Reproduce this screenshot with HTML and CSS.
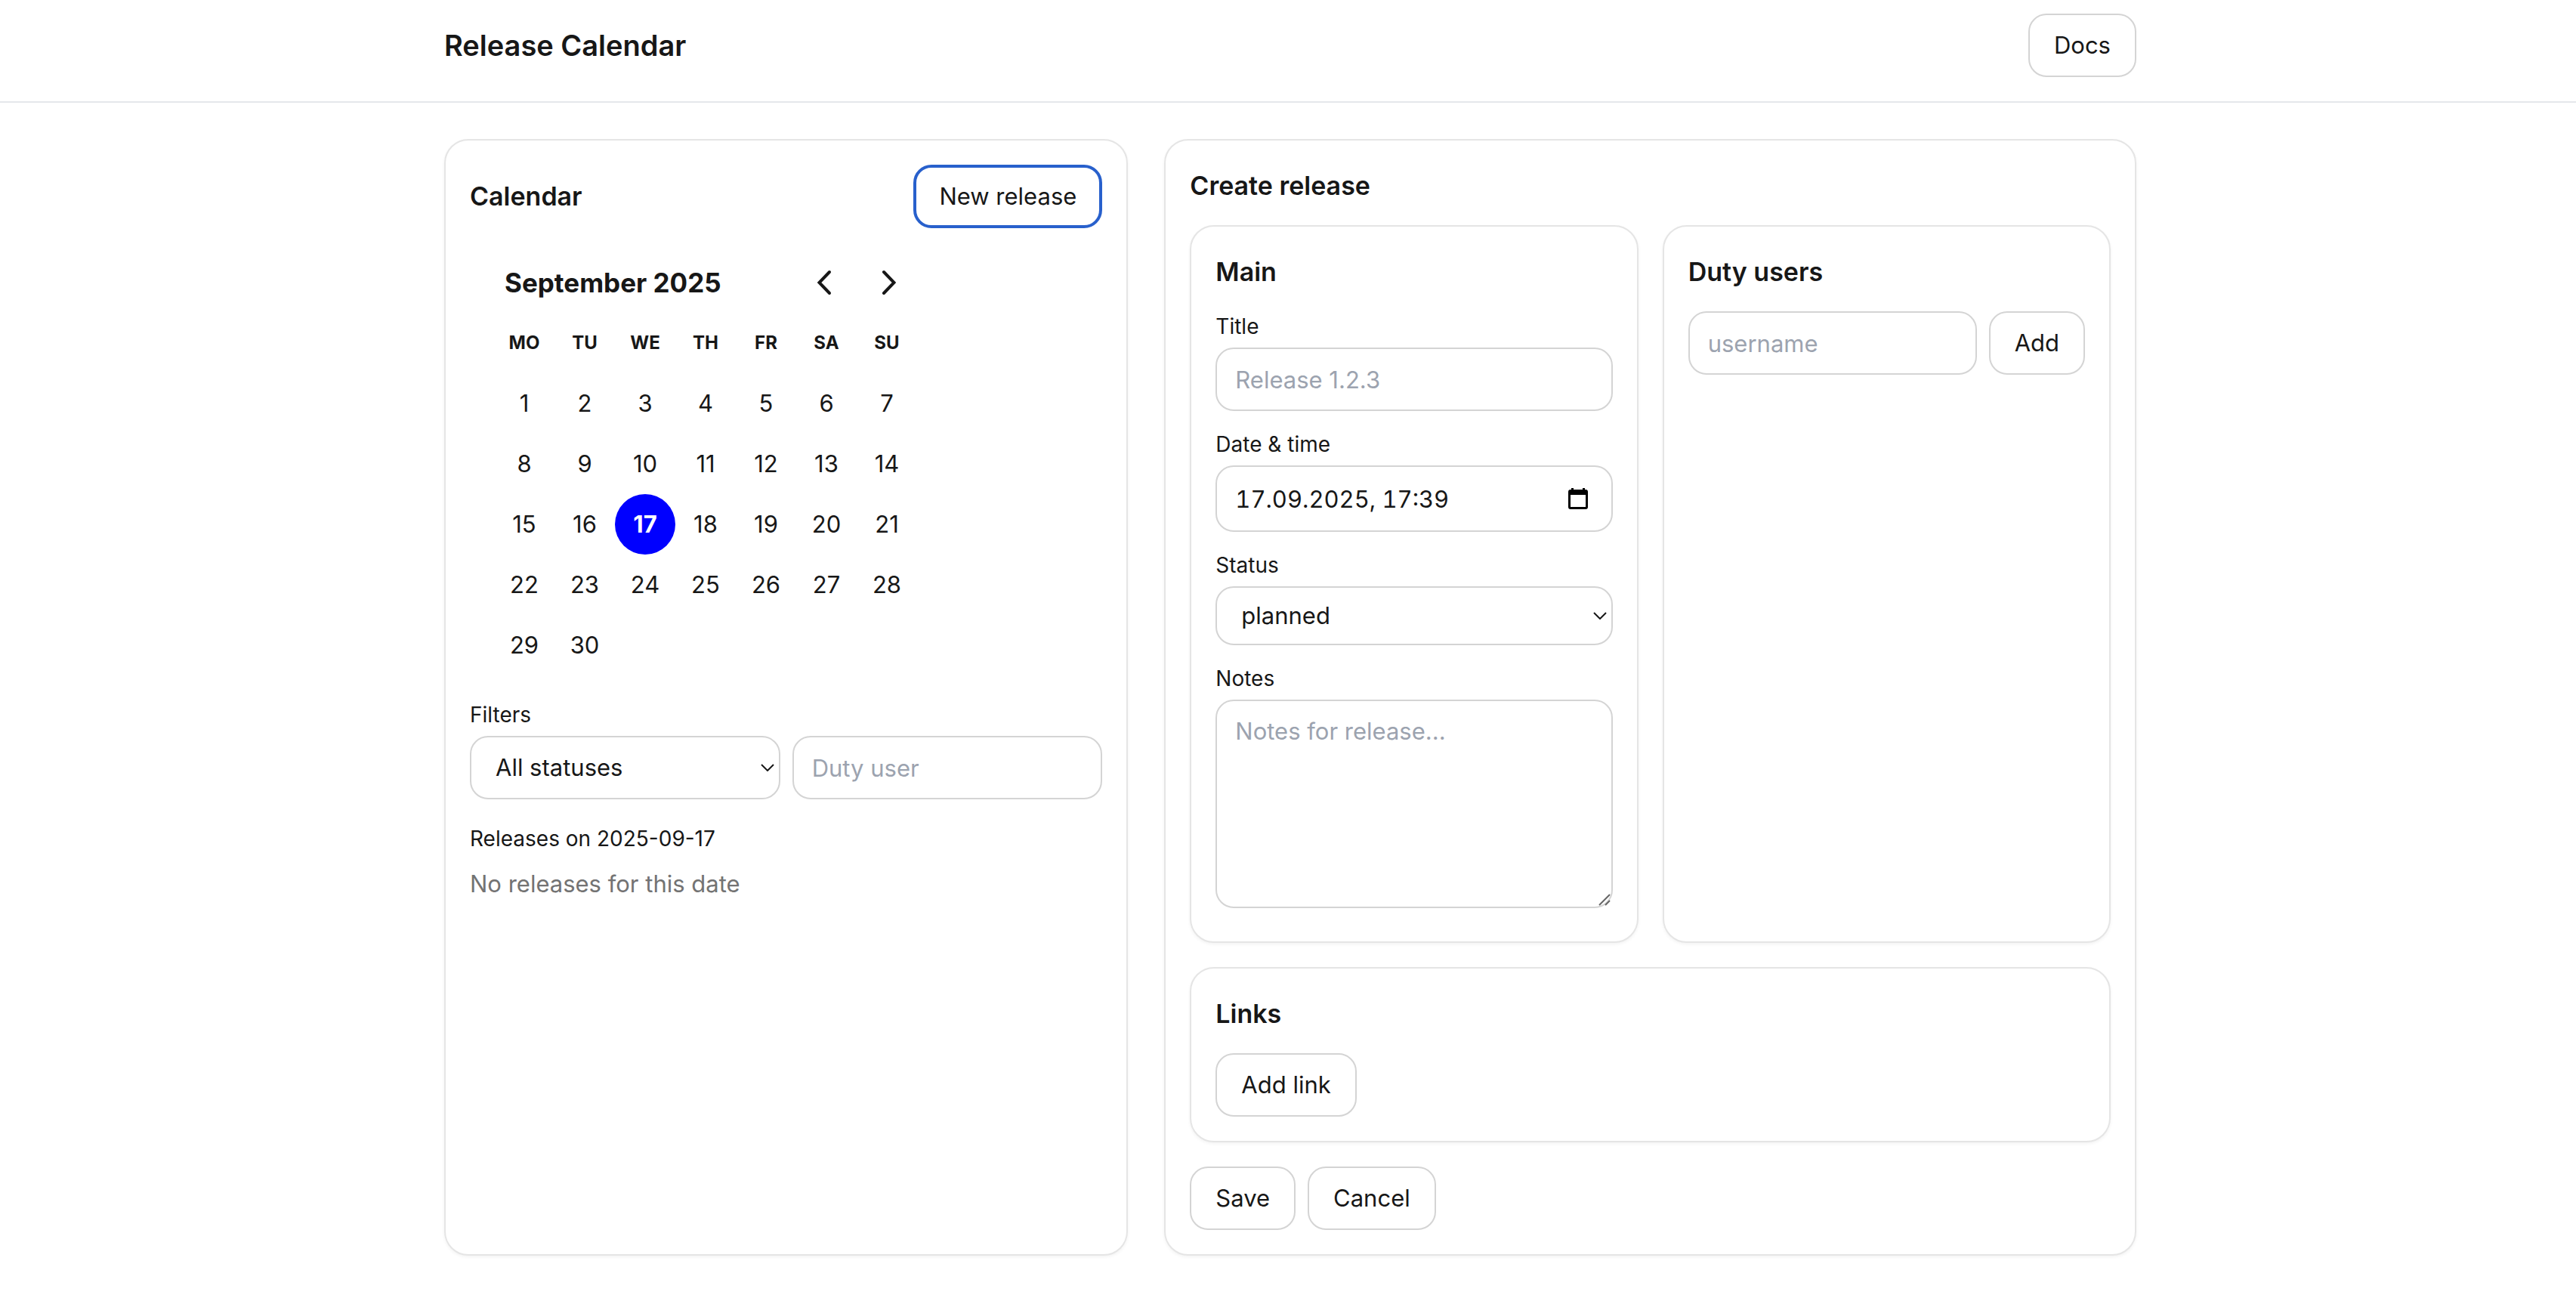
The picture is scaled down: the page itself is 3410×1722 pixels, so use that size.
FILE: index.html
```html
<!DOCTYPE html>
<html lang="en">
<head>
<meta charset="utf-8">
<meta name="viewport" content="width=device-width, initial-scale=1">
<title>Release Calendar</title>
<link rel="stylesheet" href="styles.css">
</head>
<body>
<header class="site-header">
  <div class="container header-row">
    <h1 class="site-title">Release Calendar</h1>
    <a class="btn" href="#docs">Docs</a>
  </div>
</header>
<main class="container layout">
  <section class="card sidebar">
    <div class="card-head">
      <h2 class="card-title">Calendar</h2>
      <button class="btn btn-focus" type="button">New release</button>
    </div>
    <div class="calendar">
      <div class="month-bar">
        <h3 class="month-name">September 2025</h3>
        <div class="month-nav">
          <button class="nav-btn" type="button" aria-label="Previous month"><svg width="24" height="34" viewBox="0 0 24 34"><path d="M20 3 6.500 17 20 31"/></svg></button>
          <button class="nav-btn" type="button" aria-label="Next month"><svg width="24" height="34" viewBox="0 0 24 34"><path d="M8 3l13.500 14L8 31"/></svg></button>
        </div>
      </div>
      <table class="days">
        <thead>
          <tr><th>Mo</th><th>Tu</th><th>We</th><th>Th</th><th>Fr</th><th>Sa</th><th>Su</th></tr>
        </thead>
        <tbody>
          <tr><td><button class="day" type="button">1</button></td><td><button class="day" type="button">2</button></td><td><button class="day" type="button">3</button></td><td><button class="day" type="button">4</button></td><td><button class="day" type="button">5</button></td><td><button class="day" type="button">6</button></td><td><button class="day" type="button">7</button></td></tr>
          <tr><td><button class="day" type="button">8</button></td><td><button class="day" type="button">9</button></td><td><button class="day" type="button">10</button></td><td><button class="day" type="button">11</button></td><td><button class="day" type="button">12</button></td><td><button class="day" type="button">13</button></td><td><button class="day" type="button">14</button></td></tr>
          <tr><td><button class="day" type="button">15</button></td><td><button class="day" type="button">16</button></td><td><button class="day day-selected" type="button" aria-pressed="true">17</button></td><td><button class="day" type="button">18</button></td><td><button class="day" type="button">19</button></td><td><button class="day" type="button">20</button></td><td><button class="day" type="button">21</button></td></tr>
          <tr><td><button class="day" type="button">22</button></td><td><button class="day" type="button">23</button></td><td><button class="day" type="button">24</button></td><td><button class="day" type="button">25</button></td><td><button class="day" type="button">26</button></td><td><button class="day" type="button">27</button></td><td><button class="day" type="button">28</button></td></tr>
          <tr><td><button class="day" type="button">29</button></td><td><button class="day" type="button">30</button></td><td></td><td></td><td></td><td></td><td></td></tr>
        </tbody>
      </table>
    </div>
    <div class="field">
      <label class="label" for="filter-status">Filters</label>
      <div class="filters">
        <div class="select-wrap">
          <select class="control select" id="filter-status"><option>All statuses</option><option>planned</option></select>
          <svg class="chevron" width="18" height="10" viewBox="0 0 18 10"><path d="M1 1l8 8 8-8"/></svg>
        </div>
        <input class="control" type="text" placeholder="Duty user" aria-label="Duty user">
      </div>
    </div>
    <div class="results">
      <h3 class="label">Releases on 2025-09-17</h3>
      <p class="empty">No releases for this date</p>
    </div>
  </section>
  <section class="card editor">
    <h2 class="card-title">Create release</h2>
    <form class="form">
      <div class="columns">
        <div class="card">
          <h3 class="card-title">Main</h3>
          <div class="fields">
            <div class="field">
              <label class="label" for="title">Title</label>
              <input class="control" id="title" type="text" placeholder="Release 1.2.3">
            </div>
            <div class="field">
              <label class="label" for="date">Date &amp; time</label>
              <div class="date-wrap">
                <input class="control control-date" id="date" type="text" value="17.09.2025, 17:39">
                <button class="picker" type="button" aria-label="Show date picker"><svg width="26" height="28" viewBox="0 0 26 28"><path fill-rule="evenodd" d="M4 0h3v2h12V0h3v2h1q3 0 3 3v20q0 3-3 3H3q-3 0-3-3V5q0-3 3-3h1zM3 9v16h20V9z"/></svg></button>
              </div>
            </div>
            <div class="field">
              <label class="label" for="status">Status</label>
              <div class="select-wrap">
                <select class="control select select-compact" id="status"><option>planned</option></select>
                <svg class="chevron" width="18" height="10" viewBox="0 0 18 10"><path d="M1 1l8 8 8-8"/></svg>
              </div>
            </div>
            <div class="field field-notes">
              <label class="label" for="notes">Notes</label>
              <div class="notes-wrap">
                <textarea class="control notes" id="notes" placeholder="Notes for release..."></textarea>
                <svg class="grip" width="16" height="16" viewBox="0 0 16 16"><path d="M1 15 15 1M9 15l6-6"/></svg>
              </div>
            </div>
          </div>
        </div>
        <div class="card">
          <h3 class="card-title">Duty users</h3>
          <div class="add-row">
            <input class="control" type="text" placeholder="username" aria-label="Username">
            <button class="btn" type="button">Add</button>
          </div>
        </div>
      </div>
      <div class="card">
        <h3 class="card-title">Links</h3>
        <button class="btn" type="button">Add link</button>
      </div>
      <div class="actions">
        <button class="btn" type="button">Save</button>
        <button class="btn" type="button">Cancel</button>
      </div>
    </form>
  </section>
</main>
</body>
</html>
```
FILE: styles.css
```css
*, *::before, *::after { box-sizing: border-box; }
body {
  margin: 0;
  background: #fff;
  color: #171717;
  font-family: Inter, "Liberation Sans", sans-serif;
  font-size: 31px;
  line-height: 48px;
}
h1, h2, h3, p { margin: 0; }
button, input, select, textarea { font: inherit; color: inherit; }

.container {
  max-width: 2310px;
  margin: 0 auto;
  padding: 0 32px 0 38px;
}
.site-header {
  padding: 18px 0 32px;
  border-bottom: 2px solid #e5e7eb;
}
.header-row {
  display: flex;
  align-items: center;
  justify-content: space-between;
}
.site-title { font-size: 38px; font-weight: 600; line-height: 56px; }

.layout {
  display: grid;
  grid-template-columns: repeat(12, minmax(0, 1fr));
  gap: 48px;
  padding-top: 48px;
  padding-bottom: 48px;
}
.sidebar { grid-column: span 5; }
.editor { grid-column: span 7; }

.card {
  padding: 32px;
  border: 2px solid #e5e5e5;
  border-radius: 32px;
  background: #fff;
  box-shadow: 0 2px 4px rgba(0, 0, 0, 0.05);
}
.card-head {
  display: flex;
  align-items: center;
  justify-content: space-between;
}
.card-title {
  margin-bottom: 24px;
  font-size: 34px;
  font-weight: 600;
  line-height: 56px;
}
.card-head .card-title { margin-bottom: 0; }

.btn {
  display: inline-block;
  height: 84px;
  padding: 16px 32px;
  border: 2px solid #d4d4d4;
  border-radius: 24px;
  background: #fff;
  color: #171717;
  line-height: 48px;
  text-decoration: none;
  white-space: nowrap;
}
.card > .btn, .actions .btn { display: block; }
.btn-focus {
  padding: 14px 30px;
  border: 4px solid #2860cc;
}

.calendar { width: 560px; margin: 32px; }
.month-bar {
  display: flex;
  align-items: center;
  justify-content: space-between;
  height: 80px;
  padding-left: 14px;
}
.month-name { font-size: 35px; font-weight: 700; }
.month-nav { display: flex; gap: 4px; }
.nav-btn {
  display: grid;
  place-items: center;
  width: 80px;
  height: 80px;
  padding: 0;
  border: 0;
  background: none;
}
.nav-btn path {
  fill: none;
  stroke: #171717;
  stroke-width: 4;
  stroke-linecap: round;
}
.days { border-collapse: collapse; }
.days th {
  width: 80px;
  height: 80px;
  padding: 0;
  font-size: 24px;
  font-weight: 700;
  text-transform: uppercase;
}
.days td { padding: 0; }
.day {
  display: block;
  width: 80px;
  height: 80px;
  padding: 0;
  border: 0;
  border-radius: 50%;
  background: none;
  text-align: center;
}
.day-selected { background: #00f; color: #fff; font-weight: 700; }

.label {
  display: block;
  margin-bottom: 8px;
  font-size: 28px;
  font-weight: 400;
  line-height: 40px;
}
.control {
  display: block;
  width: 100%;
  min-width: 0;
  height: 84px;
  padding: 16px 24px;
  border: 2px solid #d4d4d4;
  border-radius: 24px;
  background: #fff;
}
.control::placeholder { color: #9ca3af; opacity: 1; }
.control-date { height: 88px; font-variant-numeric: tabular-nums; }
.select { padding: 0 32px; appearance: none; }
.select-compact { height: 78px; }
.filters {
  display: grid;
  grid-template-columns: 1fr 1fr;
  gap: 16px;
}
.select-wrap, .date-wrap, .notes-wrap { position: relative; }
.chevron {
  position: absolute;
  right: 8px;
  top: 50%;
  margin-top: -5px;
  fill: none;
  stroke: #171717;
  stroke-width: 2;
  pointer-events: none;
}
.picker {
  position: absolute;
  right: 33px;
  top: 30px;
  padding: 0;
  border: 0;
  background: none;
  line-height: 0;
}
.notes { height: 276px; resize: none; }
.grip {
  position: absolute;
  right: 3px;
  bottom: 3px;
  fill: none;
  stroke: #666;
  stroke-width: 2;
}
.fields { display: grid; gap: 24px; }
.field-notes { padding-bottom: 12px; }
.results { margin-top: 32px; }
.results .label { margin-bottom: 16px; }
.empty { color: #737373; }

.form { display: grid; gap: 32px; }
.columns {
  display: grid;
  grid-template-columns: 1fr 1fr;
  gap: 32px;
}
.add-row, .actions { display: flex; gap: 16px; }
```
